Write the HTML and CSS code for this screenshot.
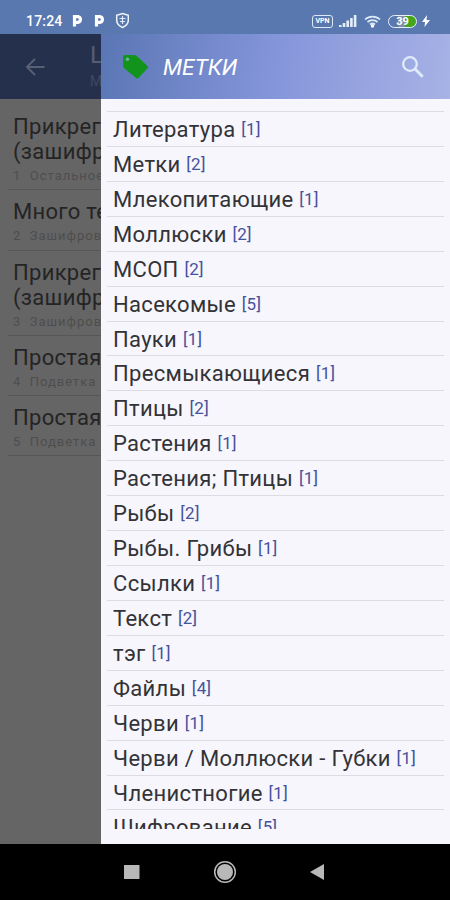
FILE: index.html
```html
<!DOCTYPE html>
<html lang="ru">
<head>
    <meta charset="UTF-8">
    <title>Метки</title>
    <link rel="stylesheet" href="styles.css">
</head>
<body>
    <div class="phone">
        <div class="status-bar">
            <span class="clock">17:24</span>
            <svg class="status-left" width="58" height="18" viewBox="0 0 58 18">
                <path d="M3.500 14.500V4.700H7.300a2.900 2.900 0 0 1 0 5.600H5" fill="none" stroke="#fff" stroke-width="3.200"/>
                <path d="M25.500 14.500V4.700H29.300a2.900 2.900 0 0 1 0 5.600H27" fill="none" stroke="#fff" stroke-width="3.200"/>
                <path d="M51.500 1.500l5.800 1.800v5c0 3.500-2.500 5.700-5.800 7.200-3.300-1.500-5.800-3.700-5.800-7.200v-5z" fill="none" stroke="#eef4fa" stroke-width="1.500"/>
                <path d="M51.500 4v8M48.500 6.500h6M49 9.500h5" stroke="#dfe9f5" stroke-width="1.200"/>
            </svg>
            <div class="status-right">
                <span class="vpn">VPN</span>
                <svg width="18" height="12" viewBox="0 0 18 12">
                    <path d="M0 10h2.600v2H0zM3.700 8h2.600v4H3.700zM7.400 5.500H10V12H7.400zM11.100 3h2.600v9h-2.600zM14.800 0h2.600v12h-2.600z" fill="#e3eefa"/>
                </svg>
                <svg class="wifi" width="17" height="13" viewBox="0 0 17 13">
                    <path d="M1 4.500a11 11 0 0 1 15 0M3.500 7a7.500 7.500 0 0 1 10 0M6 9.500a4 4 0 0 1 5 0" fill="none" stroke="#dce9f7" stroke-width="1.700"/>
                    <circle cx="8.500" cy="11" r="1.700" fill="#fff"/>
                </svg>
                <span class="battery"><span class="battery-level">39</span></span>
                <svg class="bolt" width="8" height="12" viewBox="0 0 8 12">
                    <path d="M5 0L0 7h3L2.500 12 8 5H4.500z" fill="#fff"/>
                </svg>
            </div>
        </div>

        <div class="screen">
            <div class="page">
                <div class="page-header">
                    <svg class="back" width="20" height="18" viewBox="0 0 20 18">
                        <path d="M19.500 9H2M10 1L2 9l8 8" fill="none" stroke="#586075" stroke-width="2"/>
                    </svg>
                    <div class="page-title">
                        <div class="title-main">Ц</div>
                        <div class="title-sub">М</div>
                    </div>
                </div>
                <div class="notes">
                    <div class="note">
                        <div class="note-title">Прикрег<br>(зашифр</div>
                        <div class="note-info">1&nbsp; Остальное</div>
                    </div>
                    <div class="note">
                        <div class="note-title">Много те</div>
                        <div class="note-info">2&nbsp; Зашифров</div>
                    </div>
                    <div class="note">
                        <div class="note-title">Прикрег<br>(зашифр</div>
                        <div class="note-info">3&nbsp; Зашифров</div>
                    </div>
                    <div class="note">
                        <div class="note-title">Простая</div>
                        <div class="note-info">4&nbsp; Подветка</div>
                    </div>
                    <div class="note">
                        <div class="note-title">Простая</div>
                        <div class="note-info">5&nbsp; Подветка</div>
                    </div>
                </div>
            </div>

            <div class="drawer">
                <div class="drawer-header">
                    <svg width="27" height="26" viewBox="0 0 27 26">
                        <path d="M3 1h9.500c.8 0 1.400.2 2 .7L25.500 12c.8.700.8 1.500.1 2.200L16.500 24c-.8.800-1.600.8-2.400 0L2 14c-.6-.5-.9-1.200-.9-2V3c0-1.200.7-2 1.900-2z" fill="#12941c"/>
                        <circle cx="5.500" cy="5.300" r="1.700" fill="#6eaea6"/>
                    </svg>
                    <span class="drawer-title">МЕТКИ</span>
                    <svg class="search" width="24" height="24" viewBox="0 0 24 24">
                        <circle cx="9" cy="9" r="6.800" fill="none" stroke="#e1eafb" stroke-width="2.300"/>
                        <path d="M14 14l7.700 7.700" stroke="#e1eafb" stroke-width="3"/>
                    </svg>
                </div>
                <div class="tags">
                    <div class="tag">Литература <span class="count">[1]</span></div>
                    <div class="tag">Метки <span class="count">[2]</span></div>
                    <div class="tag">Млекопитающие <span class="count">[1]</span></div>
                    <div class="tag">Моллюски <span class="count">[2]</span></div>
                    <div class="tag">МСОП <span class="count">[2]</span></div>
                    <div class="tag">Насекомые <span class="count">[5]</span></div>
                    <div class="tag">Пауки <span class="count">[1]</span></div>
                    <div class="tag">Пресмыкающиеся <span class="count">[1]</span></div>
                    <div class="tag">Птицы <span class="count">[2]</span></div>
                    <div class="tag">Растения <span class="count">[1]</span></div>
                    <div class="tag">Растения; Птицы <span class="count">[1]</span></div>
                    <div class="tag">Рыбы <span class="count">[2]</span></div>
                    <div class="tag">Рыбы. Грибы <span class="count">[1]</span></div>
                    <div class="tag">Ссылки <span class="count">[1]</span></div>
                    <div class="tag">Текст <span class="count">[2]</span></div>
                    <div class="tag">тэг <span class="count">[1]</span></div>
                    <div class="tag">Файлы <span class="count">[4]</span></div>
                    <div class="tag">Черви <span class="count">[1]</span></div>
                    <div class="tag">Черви / Моллюски - Губки <span class="count">[1]</span></div>
                    <div class="tag">Членистногие <span class="count">[1]</span></div>
                    <div class="tag">Шифрование <span class="count">[5]</span></div>
                </div>
            </div>
        </div>

        <div class="nav-bar">
            <svg width="16" height="16" viewBox="0 0 16 16">
                <path d="M0 1h15.500v14H0z" fill="#b8b8b8"/>
            </svg>
            <svg width="24" height="24" viewBox="0 0 24 24">
                <circle cx="12" cy="12" r="10.300" fill="none" stroke="#b8b8b8" stroke-width="1.500"/>
                <circle cx="12" cy="12" r="8" fill="#b8b8b8"/>
            </svg>
            <svg width="16" height="18" viewBox="0 0 16 18">
                <path d="M14 1v16L0 9z" fill="#b8b8b8"/>
            </svg>
        </div>
    </div>
</body>
</html>
```

FILE: styles.css
```css
body {
    margin: 0;
    font-family: Roboto, "Noto Sans", sans-serif;
}

.phone {
    display: flex;
    flex-direction: column;
    width: 450px;
    height: 900px;
    overflow: hidden;
    background-color: #000;
}

.status-bar {
    box-sizing: border-box;
    display: flex;
    align-items: center;
    height: 34px;
    padding: 8px 20px 0 26px;
    background-color: #5878af;
    color: #fff;
}

.clock {
    width: 45px;
    font-size: 14px;
    font-weight: 500;
    letter-spacing: 0.2px;
}

.status-right {
    display: flex;
    align-items: center;
    margin-left: auto;
}

.vpn {
    box-sizing: border-box;
    width: 21px;
    height: 13px;
    margin-right: 6px;
    border: 1.5px solid #dce9f7;
    border-radius: 3px;
    font-size: 7px;
    font-weight: 700;
    line-height: 11px;
    text-align: center;
}

.wifi {
    margin: 0 7px;
}

.battery {
    box-sizing: border-box;
    width: 29px;
    height: 13px;
    border: 1.5px solid #e8f0f8;
    border-radius: 7px;
    background: linear-gradient(to right, #5878af 0 9px, #7d92a8 9px 16px, #45a51c 16px);
}

.battery-level {
    display: block;
    font-size: 11px;
    font-weight: 700;
    line-height: 11px;
    text-align: center;
}

.bolt {
    margin-left: 5px;
}

.screen {
    display: flex;
    height: 810px;
}

/* the part of the page left visible beside the drawer, dimmed */
.page {
    flex: none;
    width: 101px;
    overflow: hidden;
    background-color: #656565;
}

.page-header {
    box-sizing: border-box;
    display: flex;
    align-items: center;
    height: 65px;
    padding-left: 25px;
    background-color: #25304c;
}

.back {
    flex: none;
}

.page-title {
    margin-left: 45px;
    color: #555d75;
}

.title-main {
    font-size: 24px;
    line-height: 28px;
}

.title-sub {
    font-size: 14px;
    line-height: 24px;
    color: #3e4862;
}

.notes {
    padding: 6px 0 0 8px;
}

.note {
    padding: 9px 0 4px 5px;
    border-bottom: 1px solid #575757;
}

.note-title {
    font-size: 22px;
    line-height: 25px;
    letter-spacing: 0.3px;
    color: #242424;
    white-space: nowrap;
}

.note-info {
    padding-top: 2px;
    font-size: 13px;
    line-height: 19.3px;
    letter-spacing: 1px;
    color: #4e4e4e;
    white-space: nowrap;
}

.drawer {
    flex: 1;
    min-width: 0;
    background-color: #f6f6fc;
}

.drawer-header {
    box-sizing: border-box;
    display: flex;
    align-items: center;
    height: 65px;
    padding: 0 25px 0 21px;
    background: linear-gradient(100deg, #5a76b4, #8595da 50%, #a7b2e5);
}

.drawer-title {
    margin-left: 14px;
    font-size: 22.5px;
    font-style: italic;
    color: #fff;
}

.search {
    margin-left: auto;
}

.tags {
    height: 717px;
    margin: 12px 6px 0;
    overflow: hidden;
    border-top: 1px solid #dcdce2;
}

.tag {
    box-sizing: border-box;
    height: 34.930px;
    padding-left: 6px;
    border-bottom: 1px solid #dcdce2;
    font-size: 22px;
    line-height: 34px;
    letter-spacing: 0.32px;
    white-space: nowrap;
    color: #333337;
}

.count {
    font-size: 17px;
    letter-spacing: 0.3px;
    vertical-align: 2px;
    color: #46529b;
}

.nav-bar {
    display: flex;
    align-items: center;
    gap: 73px;
    height: 56px;
    padding-left: 124px;
    background-color: #000;
}
```
